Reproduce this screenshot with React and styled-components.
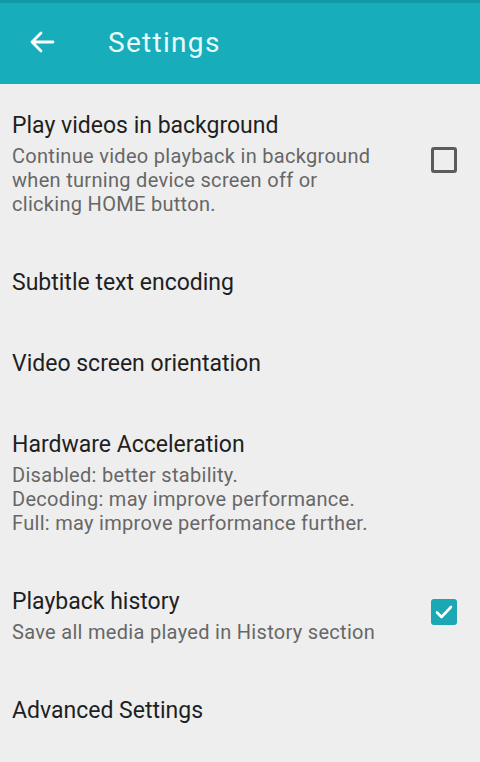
import React from 'react'
import styled, { createGlobalStyle } from 'styled-components'

const GlobalStyle = createGlobalStyle`
  html, body {
    margin: 0;
    padding: 0;
    background: #eeeeee;
    font-family: Roboto, "Noto Sans", sans-serif;
  }
`

const items = [
  {
    title: 'Play videos in background',
    lines: [
      'Continue video playback in background',
      'when turning device screen off or',
      'clicking HOME button.',
    ],
    check: 'off',
  },
  { title: 'Subtitle text encoding' },
  { title: 'Video screen orientation' },
  {
    title: 'Hardware Acceleration',
    lines: [
      'Disabled: better stability.',
      'Decoding: may improve performance.',
      'Full: may improve performance further.',
    ],
  },
  {
    title: 'Playback history',
    lines: ['Save all media played in History section'],
    check: 'on',
  },
  { title: 'Advanced Settings' },
]

function App() {
  return (
    <>
      <GlobalStyle />
      <Page>
        <Toolbar>
          <BackButton aria-label='Back'>
            <svg width='26' height='22' viewBox='0 0 26 22' fill='none'>
              <path d='M24 11H3M12 2L3 11L12 20' stroke='#ffffff' strokeWidth='2.8' strokeLinecap='round' strokeLinejoin='round' />
            </svg>
          </BackButton>
          <Title>Settings</Title>
        </Toolbar>

        <List>
          {items.map((item) => (
            <Row key={item.title}>
              <Text>
                <RowTitle>{item.title}</RowTitle>
                {item.lines && (
                  <Summary>
                    {item.lines.map((l) => (
                      <div key={l}>{l}</div>
                    ))}
                  </Summary>
                )}
              </Text>
              {item.check && (
                <Checkbox $checked={item.check === 'on'}>
                  {item.check === 'on' && (
                    <svg width='18' height='14' viewBox='0 0 18 14' fill='none'>
                      <path d='M2 7.5L6.5 12L16 2' stroke='#ffffff' strokeWidth='2.6' strokeLinecap='round' strokeLinejoin='round' />
                    </svg>
                  )}
                </Checkbox>
              )}
            </Row>
          ))}
        </List>
      </Page>
    </>
  )
}

export default App

const Page = styled.div`
  width: 480px;
  min-height: 762px;
  background: #eeeeee;
  overflow: hidden;
`

const Toolbar = styled.header`
  height: 84px;
  box-sizing: border-box;
  background: #18adba;
  border-top: 3px solid #0f9aa6;
  display: flex;
  align-items: center;
  padding-left: 29px;
`

const BackButton = styled.div`
  width: 26px;
  height: 22px;
  display: flex;
  margin-top: -3px;
`

const Title = styled.h1`
  margin: -2px 0 0 53px;
  font-size: 28px;
  font-weight: 400;
  color: #eafafa;
  letter-spacing: 1.3px;
  line-height: 32px;
`

const List = styled.div`
  display: flex;
  flex-direction: column;
`

const Row = styled.div`
  display: flex;
  align-items: center;
  justify-content: space-between;
  padding: 28px 23px 25px 12px;
`

const Text = styled.div`
  display: flex;
  flex-direction: column;
  gap: 4px;
`

const RowTitle = styled.div`
  font-size: 23px;
  line-height: 28px;
  color: #1f1f1f;
`

const Summary = styled.div`
  font-size: 20px;
  line-height: 24px;
  letter-spacing: 0.3px;
  color: #676767;
`

const Checkbox = styled.div`
  width: 26px;
  height: 26px;
  margin-bottom: 8px;
  box-sizing: border-box;
  border-radius: 3px;
  border: ${(p) => (p.$checked ? 'none' : '3px solid #5b5b5b')};
  background: ${(p) => (p.$checked ? '#1ba8b4' : 'transparent')};
  display: flex;
  align-items: center;
  justify-content: center;
  flex-shrink: 0;
`
